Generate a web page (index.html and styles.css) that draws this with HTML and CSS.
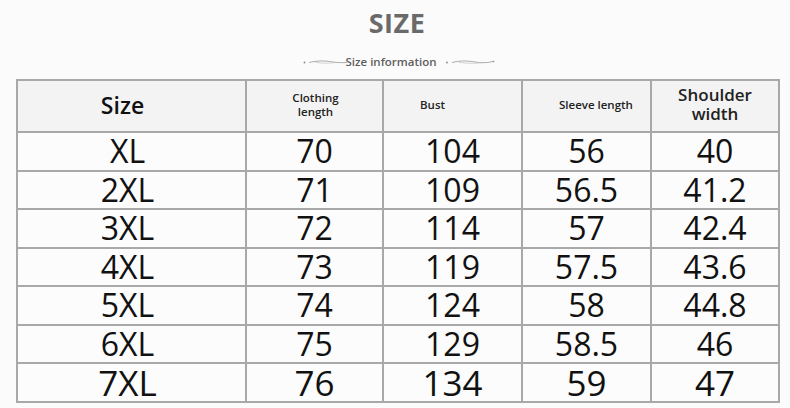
FILE: index.html
```html
<!DOCTYPE html>
<html>
<head>
<meta charset="utf-8">
<link rel="stylesheet" href="styles.css">
</head>
<body>
<div class="page">
  <h1 class="title">SIZE</h1>
  <div class="subtitle">
    <svg class="swoosh" width="44" height="8" viewBox="0 0 44 8"><circle cx="1.5" cy="4.5" r="0.9" fill="#888"/><path d="M6 4.5 C14 2.5 22 2.5 30 4 C34 4.7 38 4.8 44 4.5" stroke="#999" stroke-width="0.8" fill="none"/><path d="M12 4.2 C20 5.6 26 5.4 32 4.6" stroke="#bbb" stroke-width="0.6" fill="none"/></svg>
    <span class="subtitle-text">Size information</span>
    <svg class="swoosh right" width="50" height="8" viewBox="0 0 50 8"><circle cx="2" cy="4.5" r="0.9" fill="#888"/><path d="M7 4.5 C14 2.5 22 2.5 30 4 C36 5 42 5 48 3.5" stroke="#999" stroke-width="0.8" fill="none"/><path d="M14 4.3 C22 5.6 30 5.6 38 4.6" stroke="#bbb" stroke-width="0.6" fill="none"/><circle cx="48.5" cy="3.5" r="0.8" fill="#888"/></svg>
  </div>
  <div class="table">
    <div class="cell head c-size">Size</div>
    <div class="cell head small c-cloth">Clothing<br>length</div>
    <div class="cell head small c-bust">Bust</div>
    <div class="cell head small c-sleeve">Sleeve length</div>
    <div class="cell head medium">Shoulder<br>width</div>

    <div class="cell c-size">XL</div><div class="cell">70</div><div class="cell">104</div><div class="cell">56</div><div class="cell">40</div>
    <div class="cell c-size">2XL</div><div class="cell">71</div><div class="cell">109</div><div class="cell">56.5</div><div class="cell">41.2</div>
    <div class="cell c-size">3XL</div><div class="cell">72</div><div class="cell">114</div><div class="cell">57</div><div class="cell">42.4</div>
    <div class="cell c-size">4XL</div><div class="cell">73</div><div class="cell">119</div><div class="cell">57.5</div><div class="cell">43.6</div>
    <div class="cell c-size">5XL</div><div class="cell">74</div><div class="cell">124</div><div class="cell">58</div><div class="cell">44.8</div>
    <div class="cell c-size">6XL</div><div class="cell">75</div><div class="cell">129</div><div class="cell">58.5</div><div class="cell">46</div>
    <div class="cell c-size last">7XL</div><div class="cell last">76</div><div class="cell last">134</div><div class="cell last">59</div><div class="cell last">47</div>
  </div>
</div>
</body>
</html>
```

FILE: styles.css
```css
html, body {
  margin: 0;
  padding: 0;
  background: #fbfbfb;
}
.page {
  width: 790px;
  height: 408px;
  overflow: hidden;
  font-family: "Open Sans", "Noto Sans", sans-serif;
  display: flex;
  flex-direction: column;
  align-items: center;
}
.title {
  margin: 6px 0 0 4px;
  font-size: 27px;
  line-height: 34px;
  font-weight: 700;
  color: #6a6a6a;
  letter-spacing: 0.5px;
}
.subtitle {
  margin-top: 14px;
  height: 16px;
  display: flex;
  align-items: center;
  gap: 4px;
  margin-left: 8px;
}
.subtitle-text {
  font-size: 11.5px;
  font-weight: 600;
  color: #5e5e5e;
  line-height: 16px;
  margin-left: -6px;
}
.swoosh.right {
  margin-left: 4px;
}
.table {
  margin-top: 9px;
  align-self: flex-start;
  margin-left: 16px;
  display: grid;
  grid-template-columns: 229px 137px 139px 129px 128px;
  grid-template-rows: 52px repeat(6, 38.5px) 38.5px;
  border-top: 2px solid #a8a8a8;
  border-left: 2px solid #a8a8a8;
  background: #fcfcfc;
}
.cell {
  border-right: 2px solid #a8a8a8;
  border-bottom: 2px solid #a8a8a8;
  display: flex;
  align-items: center;
  justify-content: center;
  font-size: 32px;
  color: #111;
  line-height: 36px;
}
.cell.last {
  font-size: 35px;
  font-weight: 500;
  padding-top: 2px;
}
.cell.c-size {
  padding-right: 8px;
}
.head {
  background: #f3f3f3;
  font-weight: 600;
  font-size: 23px;
  line-height: 28px;
  text-align: center;
  padding-bottom: 3px;
}
.head.c-size {
  padding-right: 18px;
}
.head.small {
  font-size: 11.5px;
  font-weight: 600;
  line-height: 14px;
  color: #222;
  padding-bottom: 2px;
}
.head.medium {
  font-size: 17px;
  line-height: 19px;
  color: #222;
  padding-bottom: 4px;
}
.c-cloth {
  padding-left: 2px;
}
.c-bust {
  justify-content: flex-start;
  padding-left: 36px;
}
.c-sleeve {
  justify-content: flex-start;
  padding-left: 36px;
}
```
